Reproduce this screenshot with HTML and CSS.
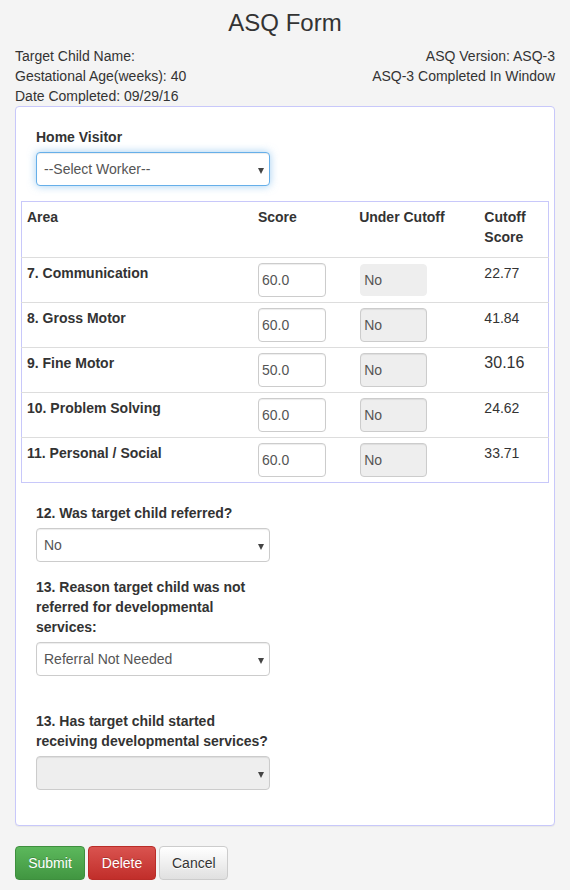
FILE: index.html
```html
<!DOCTYPE html>
<html>
<head>
<meta charset="utf-8">
<title>ASQ Form</title>
<link rel="stylesheet" href="styles.css">
</head>
<body>
<div class="page">
  <h3 class="title">ASQ Form</h3>
  <div class="info">
    <div class="info-col">
      <div>Target Child Name:</div>
      <div>Gestational Age(weeks): 40</div>
      <div>Date Completed: 09/29/16</div>
    </div>
    <div class="info-col right">
      <div>ASQ Version: ASQ-3</div>
      <div>ASQ-3 Completed In Window</div>
    </div>
  </div>

  <div class="panel">
    <div class="group first">
      <label class="lbl">Home Visitor</label>
      <div class="select focus"><span class="sel-text placeholder">--Select Worker--</span></div>
    </div>

    <table class="scores">
      <colgroup>
        <col class="c1"><col class="c2"><col class="c3"><col class="c4">
      </colgroup>
      <thead>
        <tr><th>Area</th><th>Score</th><th>Under Cutoff</th><th>Cutoff Score</th></tr>
      </thead>
      <tbody>
        <tr><td class="area">7. Communication</td><td><div class="inp">60.0</div></td><td><div class="inp ro first-ro">No</div></td><td>22.77</td></tr>
        <tr><td class="area">8. Gross Motor</td><td><div class="inp">60.0</div></td><td><div class="inp ro">No</div></td><td>41.84</td></tr>
        <tr><td class="area">9. Fine Motor</td><td><div class="inp">50.0</div></td><td><div class="inp ro">No</div></td><td class="big">30.16</td></tr>
        <tr><td class="area">10. Problem Solving</td><td><div class="inp">60.0</div></td><td><div class="inp ro">No</div></td><td>24.62</td></tr>
        <tr><td class="area">11. Personal / Social</td><td><div class="inp">60.0</div></td><td><div class="inp ro">No</div></td><td>33.71</td></tr>
      </tbody>
    </table>

    <div class="group after-table">
      <label class="lbl">12. Was target child referred?</label>
      <div class="select"><span class="sel-text">No</span></div>
    </div>
    <div class="group">
      <label class="lbl">13. Reason target child was not referred for developmental services:</label>
      <div class="select"><span class="sel-text">Referral Not Needed</span></div>
    </div>
    <div class="group spaced">
      <label class="lbl">13. Has target child started receiving developmental services?</label>
      <div class="select disabled"><span class="sel-text"></span></div>
    </div>
  </div>

  <div class="actions">
    <button class="btn success">Submit</button>
    <button class="btn danger">Delete</button>
    <button class="btn default">Cancel</button>
  </div>
</div>
</body>
</html>
```

FILE: styles.css
```css
* { box-sizing: border-box; }
html, body { margin: 0; padding: 0; }
body {
  background: #f4f4f4;
  font-family: "Liberation Sans", Arial, sans-serif;
  font-size: 14px;
  line-height: 20px;
  color: #333;
}
.page { padding: 0 15px; }
.title {
  margin: 10px 0 10px;
  font-size: 24px;
  line-height: 26px;
  font-weight: normal;
  text-align: center;
}
.info { display: flex; justify-content: space-between; }
.info-col.right { text-align: right; }

.panel {
  background: #fff;
  border: 1px solid #c8c8fa;
  border-radius: 4px;
  padding: 20px 5px 20px;
  box-shadow: 0 1px 1px rgba(0,0,0,.05);
}
.group { padding: 0 15px; margin-bottom: 15px; }
.group.after-table { margin-top: 20px; }
.group.spaced { margin-top: 35px; margin-bottom: 15px; }
.lbl {
  display: block;
  font-weight: bold;
  margin-bottom: 5px;
  width: 234px;
}
.select {
  position: relative;
  width: 234px;
  height: 34px;
  border: 1px solid #ccc;
  border-radius: 4px;
  background: #fff;
  padding: 0 7px;
  display: flex;
  align-items: center;
  color: #555;
  box-shadow: inset 0 1px 1px rgba(0,0,0,.075);
}
.select::after {
  content: "";
  position: absolute;
  right: 5px;
  top: 15px;
  border-left: 3.5px solid transparent;
  border-right: 3.5px solid transparent;
  border-top: 6px solid #444;
}
.select.focus {
  border-color: #66afe9;
  box-shadow: inset 0 1px 1px rgba(0,0,0,.075), 0 0 8px rgba(102,175,233,.6);
}
.select.disabled { background: #eee; }
.placeholder { color: #555; }

.scores {
  width: 100%;
  border-collapse: collapse;
  table-layout: fixed;
  border: 1px solid #c8c8fa;
}
.c1 { width: 231px; }
.c2 { width: 101px; }
.c3 { width: 125px; }
.c4 { width: 69px; }
.scores th {
  text-align: left;
  vertical-align: top;
  font-weight: bold;
  padding: 5px 5px 10px;
}
.scores td {
  border-top: 1px solid #ddd;
  padding: 5px 5px;
  vertical-align: top;
}
.scores td.area { font-weight: bold; }
.scores td.big { font-size: 16px; }
.inp {
  width: 68px;
  height: 34px;
  border: 1px solid #ccc;
  border-radius: 4px;
  padding: 0 3px;
  display: flex;
  align-items: center;
  color: #555;
  background: #fff;
  box-shadow: inset 0 1px 1px rgba(0,0,0,.075);
}
.inp.ro {
  width: 67px;
  margin-left: 1px;
  background: #eee;
}
.inp.first-ro { border-color: #eee; box-shadow: none; height: 32px; margin-top: 1px; }

.actions { margin-top: 20px; display: flex; gap: 4px; }
.btn {
  font-family: inherit;
  font-size: 14px;
  line-height: 20px;
  height: 34px;
  padding: 6px 12px;
  border-radius: 4px;
  border: 1px solid;
  cursor: pointer;
}
.btn.success {
  width: 70px;
  color: #fff;
  background: linear-gradient(to bottom, #5cb85c 0, #419641 100%);
  border-color: #3e8f3e;
  text-shadow: 0 -1px 0 rgba(0,0,0,.2);
}
.btn.danger {
  width: 68px;
  color: #fff;
  background: linear-gradient(to bottom, #d9534f 0, #c12e2a 100%);
  border-color: #b92c28;
  text-shadow: 0 -1px 0 rgba(0,0,0,.2);
  margin-left: -1px;
}
.btn.default {
  width: 69px;
  color: #333;
  background: linear-gradient(to bottom, #fff 0, #e0e0e0 100%);
  border-color: #ccc;
  text-shadow: 0 1px 0 #fff;
  margin-left: -1px;
}
```
